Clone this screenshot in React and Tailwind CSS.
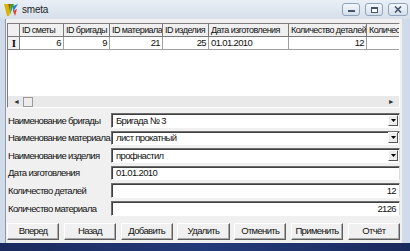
import React from 'react'

const cols = [
  { title: 'ID сметы', w: 'w-[44px]', value: '6', right: true },
  { title: 'ID бригады', w: 'w-[46px]', value: '9', right: true },
  { title: 'ID материала', w: 'w-[53px]', value: '21', right: true },
  { title: 'ID изделия', w: 'w-[46px]', value: '25', right: true },
  { title: 'Дата изготовления', w: 'w-[80px]', value: '01.01.2010', right: false },
  { title: 'Количество деталей', w: 'w-[78px]', value: '12', right: true },
  { title: 'Количество материала', w: 'w-[80px]', value: '', right: false },
]

const fields = [
  { label: 'Наименование бригады', value: 'Бригада № 3', combo: true },
  { label: 'Наименование материала', value: 'лист прокатный', combo: true },
  { label: 'Наименование изделия', value: 'профнастил', combo: true },
  { label: 'Дата изготовления', value: '01.01.2010' },
  { label: 'Количество деталей', value: '12', right: true },
  { label: 'Количество материала', value: '2126', right: true },
]

const buttons = ['Вперед', 'Назад', 'Добавить', 'Удалить', 'Отменить', 'Применить', 'Отчёт']

function AppIcon() {
  return (
    <svg width="14" height="14" viewBox="0 0 14 14">
      <polygon points="0,1 4,1 6,9 5,13 3,13" fill="#d9b400" />
      <polygon points="4,1 7,1 6,9" fill="#8a6a00" />
      <polygon points="7,1 10,1 6,12" fill="#3aa02a" />
      <polygon points="9,3 14,1 9,9" fill="#2c7ed6" />
      <polygon points="9,8 13,6 11,13" fill="#e0452b" />
    </svg>
  )
}

function TitleButton({ children, close }) {
  return (
    <div
      className={`flex h-[13px] items-center justify-center rounded-[3px] border border-[#8fa3ba] bg-gradient-to-b from-[#f4f7fb] to-[#d5dfea] ${
        close ? 'w-[20px]' : 'w-[18px]'
      }`}
    >
      {children}
    </div>
  )
}

export default function App() {
  return (
    <div className="flex h-[251px] w-[410px] flex-col overflow-hidden bg-[#cfdbe8] font-['Liberation_Sans',sans-serif] text-[9.5px] leading-none tracking-[-0.65px] text-[#111]">
      {/* title bar */}
      <div className="flex h-[19px] shrink-0 items-center bg-gradient-to-b from-[#e9eff6] to-[#d6e0eb] pl-[4px] pr-[2px]">
        <AppIcon />
        <span className="ml-[4px] text-[10px] tracking-[-0.2px] text-[#1e1e1e]">smeta</span>
        <div className="ml-auto flex gap-[5px]">
          <TitleButton>
            <div className="mt-[3px] h-[2px] w-[7px] border border-[#44546a] bg-white" />
          </TitleButton>
          <TitleButton>
            <div className="h-[6px] w-[7px] border border-[#44546a] border-t-2 bg-white" />
          </TitleButton>
          <TitleButton close>
            <svg width="8" height="7" viewBox="0 0 8 7">
              <path d="M1 0.5 L7 6.5 M7 0.5 L1 6.5" stroke="#44546a" strokeWidth="1.6" />
            </svg>
          </TitleButton>
        </div>
      </div>

      {/* client area */}
      <div className="ml-[5px] mr-[8px] flex flex-1 flex-col border-l border-[#8c9aab] bg-[#f0f0f0] px-[1px] pt-[4px]">
        {/* grid */}
        <div className="flex h-[85px] w-[393px] flex-col border border-t-[#7d7d7d] border-l-[#7d7d7d] border-b-white border-r-white bg-white">
          <div className="flex h-[13px] overflow-hidden bg-[#f0f0f0] text-[9px] tracking-[-0.55px]">
            <div className="h-full w-[12px] shrink-0 border-r border-b border-[#7a7a7a]" />
            {cols.map((c) => (
              <div
                key={c.title}
                className={`${c.w} flex h-full shrink-0 items-center overflow-hidden whitespace-nowrap border-r border-b border-[#7a7a7a] pl-[2px]`}
              >
                {c.title}
              </div>
            ))}
          </div>
          <div className="flex h-[13px] overflow-hidden">
            <div className="flex h-full w-[12px] shrink-0 items-center justify-center border-r border-b border-[#7a7a7a] bg-[#f0f0f0]">
              <span className="font-['Liberation_Serif',serif] text-[11px] font-bold">I</span>
            </div>
            {cols.map((c) => (
              <div
                key={c.title}
                className={`${c.w} flex h-full shrink-0 items-center overflow-hidden whitespace-nowrap border-r border-b border-[#a0a0a0] px-[2px] ${
                  c.right ? 'justify-end' : ''
                }`}
              >
                {c.value}
              </div>
            ))}
          </div>
          <div className="flex-1" />
          {/* horizontal scrollbar */}
          <div className="flex h-[11px] items-center bg-[#e9e9e9] px-[2px]">
            <span className="ml-[3px] text-[7px] text-[#333]">◄</span>
            <div className="ml-[4px] h-[10px] w-[10px] border border-[#9a9a9a] bg-[#ececec]" />
            <span className="ml-auto mr-[3px] text-[7px] text-[#333]">►</span>
          </div>
        </div>

        {/* form */}
        <div className="mt-[5px] flex flex-col gap-[3px]">
          {fields.map((f) => (
            <div key={f.label} className="flex h-[14.6px] items-center">
              <span className="w-[104px] shrink-0 whitespace-nowrap pl-[1px]">{f.label}</span>
              <div
                className={`flex h-full w-[289px] items-center border border-t-[#6e6e6e] border-l-[#6e6e6e] border-b-white border-r-[#dcdcdc] bg-white shadow-[inset_1px_1px_0_#404040] pl-[4px] ${
                  f.right ? 'justify-end pr-[3px]' : ''
                }`}
              >
                <span className="flex-1 whitespace-nowrap" style={{ textAlign: f.right ? 'right' : 'left' }}>
                  {f.value}
                </span>
                {f.combo && (
                  <div className="mr-[1px] flex h-[11px] w-[10px] items-center justify-center border border-t-white border-l-white border-r-[#555] border-b-[#555] bg-[#ececec]">
                    <svg width="5" height="3" viewBox="0 0 5 3">
                      <polygon points="0,0 5,0 2.5,3" fill="#000" />
                    </svg>
                  </div>
                )}
              </div>
            </div>
          ))}
        </div>

        {/* buttons */}
        <div className="mt-[7px] flex w-[393px] gap-[4.5px]">
          {buttons.map((b) => (
            <div
              key={b}
              className="flex h-[17px] flex-1 items-center justify-center border border-t-white border-l-white border-r-[#5e5e5e] border-b-[#5e5e5e] bg-[#f0f0f0] shadow-[inset_-1px_-1px_0_#a9a9a9]"
            >
              {b}
            </div>
          ))}
        </div>
      </div>

      {/* desktop strip below the window */}
      <div className="h-[8px] shrink-0 bg-gradient-to-r from-[#1b2a5e] via-[#233a7a] to-[#1b2a5e]" />
    </div>
  )
}
